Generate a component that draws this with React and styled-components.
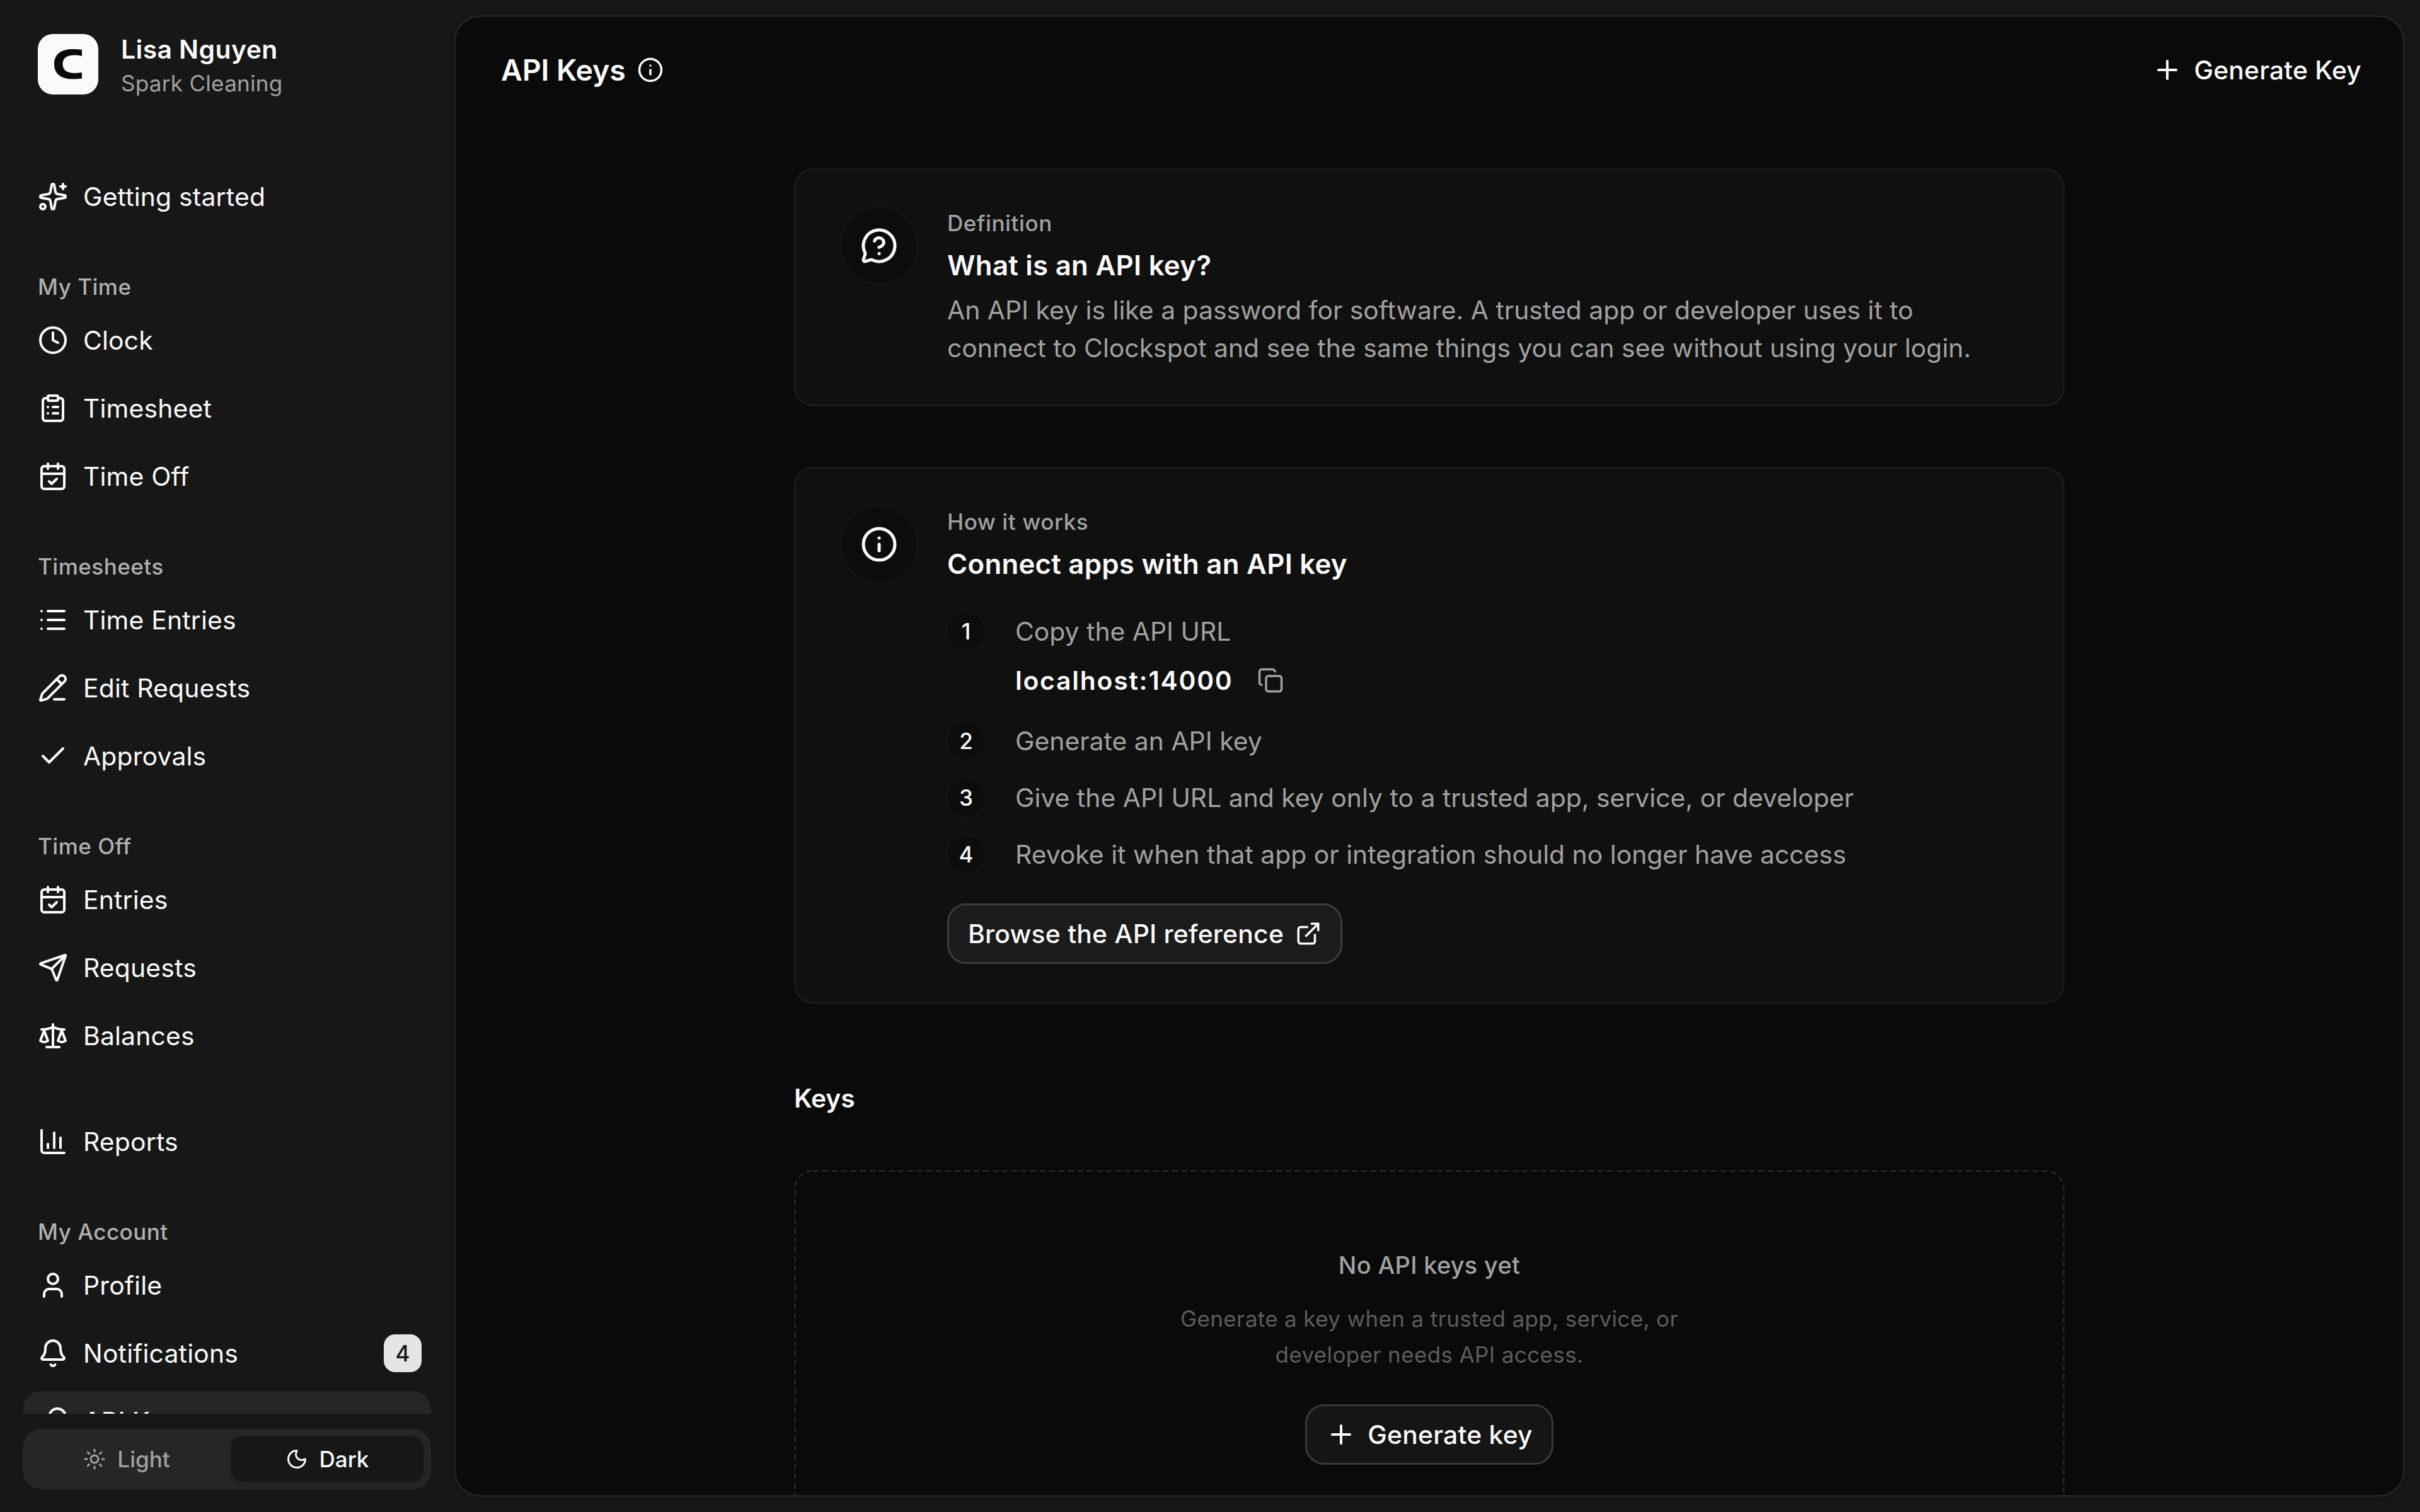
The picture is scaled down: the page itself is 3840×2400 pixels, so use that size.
import React from 'react';
import styled, { createGlobalStyle } from 'styled-components';
import {
  Bell,
  CalendarCheck,
  ChartColumn,
  Check,
  ClipboardList,
  Clock,
  Copy,
  ExternalLink,
  Info,
  KeyRound,
  List,
  MessageCircleQuestionMark,
  Moon,
  PencilLine,
  Plus,
  Scale,
  Send,
  Sparkles,
  Sun,
  User,
} from 'lucide-react';

const navGroups = [
  { items: [{ label: 'Getting started', icon: Sparkles }] },
  {
    title: 'My Time',
    items: [
      { label: 'Clock', icon: Clock },
      { label: 'Timesheet', icon: ClipboardList },
      { label: 'Time Off', icon: CalendarCheck },
    ],
  },
  {
    title: 'Timesheets',
    items: [
      { label: 'Time Entries', icon: List },
      { label: 'Edit Requests', icon: PencilLine },
      { label: 'Approvals', icon: Check },
    ],
  },
  {
    title: 'Time Off',
    items: [
      { label: 'Entries', icon: CalendarCheck },
      { label: 'Requests', icon: Send },
      { label: 'Balances', icon: Scale },
    ],
  },
  { items: [{ label: 'Reports', icon: ChartColumn }] },
  {
    title: 'My Account',
    items: [
      { label: 'Profile', icon: User },
      { label: 'Notifications', icon: Bell, count: 4 },
      { label: 'API Keys', icon: KeyRound, active: true },
    ],
  },
];

const Sidebar = () => (
  <SidebarContainer>
    <Account>
      <Logo viewBox="0 0 96 96">
        <path d="M70 25Q64 24 56 24C37 24 26 32 26 47.7S37 71.5 56 71.5Q64 71.5 70 70.5V61Q64 62 58 62C46 62 39.5 57 39.5 47.7S46 33.6 58 33.6Q64 33.6 70 35Z" />
      </Logo>
      <AccountText>
        <AccountName>Lisa Nguyen</AccountName>
        <AccountCompany>Spark Cleaning</AccountCompany>
      </AccountText>
    </Account>
    <Nav>
      {navGroups.map((group, i) => (
        <NavGroup key={i}>
          {group.title && <NavTitle>{group.title}</NavTitle>}
          <NavList>
            {group.items.map(({ label, icon: Icon, count, active }) => (
              <NavItem key={label} $active={active}>
                <Icon size={48} />
                <NavLabel>{label}</NavLabel>
                {count && <Badge>{count}</Badge>}
              </NavItem>
            ))}
          </NavList>
        </NavGroup>
      ))}
    </Nav>
    <ThemeSwitch>
      <ThemeOption>
        <Sun size={36} />
        Light
      </ThemeOption>
      <ThemeOption $selected>
        <Moon size={36} />
        Dark
      </ThemeOption>
    </ThemeSwitch>
  </SidebarContainer>
);

const App = () => (
  <>
    <GlobalStyle />
    <Page>
      <Sidebar />
      <Panel>
        <Header>
          <Title>
            API Keys
            <Info size={42} />
          </Title>
          <HeaderAction>
            <Plus size={48} />
            Generate Key
          </HeaderAction>
        </Header>
        <Content>
          <Card>
            <CardIcon>
              <MessageCircleQuestionMark size={60} />
            </CardIcon>
            <CardBody>
              <Eyebrow>Definition</Eyebrow>
              <CardTitle>What is an API key?</CardTitle>
              <CardText>
                An API key is like a password for software. A trusted app or developer uses it to
                <br />
                connect to Clockspot and see the same things you can see without using your login.
              </CardText>
            </CardBody>
          </Card>

          <Card>
            <CardIcon>
              <Info size={60} />
            </CardIcon>
            <CardBody>
              <Eyebrow>How it works</Eyebrow>
              <CardTitle>Connect apps with an API key</CardTitle>
              <Steps>
                <Step>
                  <StepNumber>1</StepNumber>
                  <div>
                    <StepText>Copy the API URL</StepText>
                    <Url>
                      <UrlText>localhost:14000</UrlText>
                      <Copy size={42} />
                    </Url>
                  </div>
                </Step>
                <Step>
                  <StepNumber>2</StepNumber>
                  <StepText>Generate an API key</StepText>
                </Step>
                <Step>
                  <StepNumber>3</StepNumber>
                  <StepText>Give the API URL and key only to a trusted app, service, or developer</StepText>
                </Step>
                <Step>
                  <StepNumber>4</StepNumber>
                  <StepText>Revoke it when that app or integration should no longer have access</StepText>
                </Step>
              </Steps>
              <Button>
                Browse the API reference
                <ExternalLink size={42} />
              </Button>
            </CardBody>
          </Card>

          <SectionTitle>Keys</SectionTitle>
          <EmptyState>
            <DashedOutline>
              <rect x="1.5" y="1.5" width="2013" height="597" rx="28.5" />
            </DashedOutline>
            <EmptyTitle>No API keys yet</EmptyTitle>
            <EmptyText>
              Generate a key when a trusted app, service, or
              <br />
              developer needs API access.
            </EmptyText>
            <Button $dark>
              <Plus size={48} />
              Generate key
            </Button>
          </EmptyState>
        </Content>
      </Panel>
    </Page>
  </>
);

export default App;

const GlobalStyle = createGlobalStyle`
  * {
    box-sizing: border-box;
  }
  body {
    margin: 0;
    background: #171717;
    color: #fafafa;
    font-family: Inter, 'Liberation Sans', sans-serif;
    font-size: 40.8px;
    -webkit-font-smoothing: antialiased;
  }
  svg {
    flex-shrink: 0;
  }
`;

const Page = styled.div`
  display: flex;
  width: 3840px;
  height: 2400px;
  overflow: hidden;
`;

// sidebar
const SidebarContainer = styled.aside`
  display: flex;
  flex-direction: column;
  width: 720px;
  padding: 45px 36px 36px;
`;

const Account = styled.div`
  display: flex;
  align-items: center;
  gap: 36px;
  padding-left: 24px;
`;

const Logo = styled.svg`
  width: 96px;
  height: 96px;
  border-radius: 24px;
  background: #fafafa;
  fill: #0a0a0a;
`;

const AccountText = styled.div`
  padding-top: 6px;
  line-height: 54px;
`;

const AccountName = styled.div`
  font-weight: 600;
  letter-spacing: 0.45px;
`;

const AccountCompany = styled.div`
  color: #a1a1a1;
  font-size: 35px;
  letter-spacing: 0.3px;
`;

const Nav = styled.nav`
  display: flex;
  flex: 1;
  flex-direction: column;
  gap: 72px;
  min-height: 0;
  margin: 105px 0 24px;
  overflow: hidden;
`;

const NavGroup = styled.div`
  flex-shrink: 0;
`;

const NavTitle = styled.div`
  height: 60px;
  padding-left: 24px;
  color: #b0b0b0;
  font-size: 35px;
  font-weight: 500;
  line-height: 46px;
  letter-spacing: 0.5px;
`;

const NavList = styled.div`
  display: flex;
  flex-direction: column;
  gap: 12px;
`;

const NavItem = styled.a`
  display: flex;
  align-items: center;
  gap: 24px;
  height: 96px;
  padding: 0 15px 0 24px;
  border-radius: 30px;
  background: ${(props) => (props.$active ? '#262626' : 'transparent')};
  font-weight: ${(props) => (props.$active ? 500 : 400)};
  letter-spacing: 0.2px;
`;

const NavLabel = styled.span`
  flex: 1;
`;

const Badge = styled.span`
  display: flex;
  align-items: center;
  justify-content: center;
  width: 60px;
  height: 60px;
  border-radius: 18px;
  background: #e5e5e5;
  color: #171717;
  font-size: 35px;
  font-weight: 500;
`;

const ThemeSwitch = styled.div`
  display: flex;
  gap: 12px;
  height: 96px;
  padding: 12px;
  border-radius: 30px;
  background: #262626;
`;

const ThemeOption = styled.div`
  display: flex;
  flex: 1;
  align-items: center;
  justify-content: center;
  gap: 18px;
  border-radius: 18px;
  background: ${(props) => (props.$selected ? '#171717' : 'transparent')};
  box-shadow: ${(props) => (props.$selected ? '0 3px 9px rgba(0, 0, 0, 0.1)' : 'none')};
  color: ${(props) => (props.$selected ? '#fafafa' : '#a1a1a1')};
  font-size: 35px;
  font-weight: 500;
`;

// main panel
const Panel = styled.main`
  display: flex;
  flex: 1;
  flex-direction: column;
  margin: 24px 24px 24px 0;
  border: 3px solid #232323;
  border-radius: 42px;
  background: #0a0a0a;
  box-shadow: 0 3px 9px rgba(0, 0, 0, 0.1), 0 3px 6px -3px rgba(0, 0, 0, 0.1);
  overflow: hidden;
`;

const Header = styled.header`
  display: flex;
  flex-shrink: 0;
  align-items: center;
  justify-content: space-between;
  height: 168px;
  padding: 0 66px 0 72px;
`;

const Title = styled.h1`
  display: flex;
  align-items: center;
  gap: 18px;
  margin: 0;
  font-size: 46.5px;
  font-weight: 600;
  letter-spacing: -0.13px;
`;

const HeaderAction = styled.div`
  display: flex;
  align-items: center;
  gap: 18px;
  font-weight: 500;
  letter-spacing: 0.2px;
`;

const Content = styled.div`
  display: flex;
  flex-shrink: 0;
  flex-direction: column;
  width: 2016px;
  margin: 72px 0 0 537px;
`;

const Card = styled.section`
  display: flex;
  flex-shrink: 0;
  gap: 48px;
  margin-bottom: 96px;
  padding: 60px 72px;
  border: 3px solid #1a1a1a;
  border-radius: 30px;
  background: #101010;
`;

const CardIcon = styled.div`
  display: flex;
  flex-shrink: 0;
  align-items: center;
  justify-content: center;
  width: 120px;
  height: 120px;
  border-radius: 50%;
  background: #0c0c0c;
  box-shadow: 0 0 0 3px #151515;
`;

const CardBody = styled.div`
  flex: 1;
`;

const Eyebrow = styled.div`
  color: #a1a1a1;
  font-size: 35px;
  font-weight: 500;
  line-height: 48px;
  letter-spacing: 0.6px;
`;

const CardTitle = styled.h2`
  margin: 14px 0 10px;
  font-size: 43.7px;
  font-weight: 600;
  line-height: 60px;
  letter-spacing: 0.3px;
`;

const CardText = styled.p`
  margin: 0;
  color: #a1a1a1;
  line-height: 60px;
  letter-spacing: 0.03px;
`;

const Steps = styled.div`
  display: flex;
  flex-direction: column;
  gap: 30px;
  margin: 46px 0 48px;
`;

const Step = styled.div`
  display: flex;
  gap: 48px;
`;

const StepNumber = styled.div`
  display: flex;
  flex-shrink: 0;
  align-items: center;
  justify-content: center;
  width: 60px;
  height: 60px;
  border-radius: 50%;
  background: #0c0c0c;
  box-shadow: 0 0 0 3px #141414;
  font-size: 35px;
  font-weight: 500;
`;

const StepText = styled.div`
  color: #a1a1a1;
  line-height: 60px;
  letter-spacing: 0.03px;
`;

const Url = styled.div`
  display: flex;
  align-items: center;
  gap: 38px;
  height: 72px;
  margin-top: 12px;
  color: #a1a1a1;
`;

const UrlText = styled.span`
  color: #fafafa;
  font-weight: 600;
  letter-spacing: 1.8px;
`;

const Button = styled.div`
  display: flex;
  align-items: center;
  gap: 18px;
  width: fit-content;
  height: 96px;
  padding: 0 30px;
  border: 3px solid ${(props) => (props.$dark ? '#383838' : '#3b3b3b')};
  border-radius: 30px;
  background: ${(props) => (props.$dark ? '#151515' : '#1b1b1b')};
  font-weight: 500;
  letter-spacing: 0.25px;
`;

const SectionTitle = styled.h3`
  margin: 24px 0 84px;
  font-size: 40.8px;
  font-weight: 600;
  line-height: 60px;
  letter-spacing: -0.1px;
`;

const EmptyState = styled.section`
  position: relative;
  display: flex;
  flex-direction: column;
  flex-shrink: 0;
  align-items: center;
  height: 600px;
  padding-top: 123px;
  text-align: center;
`;

const DashedOutline = styled.svg`
  position: absolute;
  inset: 0;
  width: 100%;
  height: 100%;
  fill: none;
  stroke: #242424;
  stroke-width: 3;
  stroke-dasharray: 9 6;
`;

const EmptyTitle = styled.div`
  color: #a1a1a1;
  font-size: 37.8px;
  font-weight: 500;
  line-height: 57px;
  letter-spacing: 0.36px;
`;

const EmptyText = styled.p`
  margin: 28px 0 50px;
  color: #5c5c5c;
  font-size: 35px;
  line-height: 57px;
  letter-spacing: 0.37px;
`;
